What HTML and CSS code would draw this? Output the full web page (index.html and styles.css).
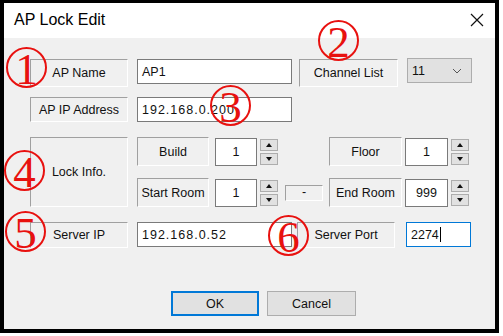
FILE: index.html
```html
<!DOCTYPE html>
<html lang="en">
<head>
  <meta charset="UTF-8">
  <title>AP Lock Edit</title>
  <link rel="stylesheet" href="styles.css">
</head>
<body>
  <div class="dialog">
    <div class="titlebar">
      <span class="title">AP Lock Edit</span>
      <svg class="close" width="14" height="14" viewBox="0 0 14 14">
        <path d="M1 1 L13 13 M13 1 L1 13" stroke="#111" stroke-width="1.2" fill="none"/>
      </svg>
    </div>

    <div class="dlg-body">
      <!-- AP name / channel -->
      <div class="row row-name">
        <div class="static w-label tall">AP Name</div>
        <div class="edit w-ip">AP1</div>
        <div class="static w-channel tall">Channel List</div>
        <div class="combo">
          <span>11</span>
          <svg width="10" height="6" viewBox="0 0 10 6"><polyline points="1,1 5,5 9,1" stroke="#555" stroke-width="1" fill="none"/></svg>
        </div>
      </div>

      <div class="row row-ip">
        <div class="static w-label">AP IP Address</div>
        <div class="edit w-ip ip">192.168.0.200</div>
      </div>

      <!-- lock info block -->
      <div class="row row-lock">
        <div class="static w-label lock-label">Lock Info.</div>
        <div class="lock-rows">
          <div class="lock-row">
            <div class="static w-sub">Build</div>
            <div class="edit num w-num">1</div>
            <div class="spin"><span class="up"></span><span class="down"></span></div>
            <div class="dash hidden">-</div>
            <div class="static w-sub2">Floor</div>
            <div class="edit num w-num2">1</div>
            <div class="spin"><span class="up"></span><span class="down"></span></div>
          </div>
          <div class="lock-row">
            <div class="static w-sub">Start Room</div>
            <div class="edit num w-num">1</div>
            <div class="spin"><span class="up"></span><span class="down"></span></div>
            <div class="dash">-</div>
            <div class="static w-sub2">End Room</div>
            <div class="edit num w-num2">999</div>
            <div class="spin"><span class="up"></span><span class="down"></span></div>
          </div>
        </div>
      </div>

      <div class="row row-server">
        <div class="static w-label server">Server IP</div>
        <div class="edit w-ip ip">192.168.0.52</div>
        <div class="static w-port server">Server Port</div>
        <div class="edit w-portedit focus">2274<span class="caret"></span></div>
      </div>

      <div class="buttons">
        <button class="btn default">OK</button>
        <button class="btn">Cancel</button>
      </div>
    </div>

    <!-- red annotation marks -->
    <span class="mark m1">1</span>
    <span class="mark m2">2</span>
    <span class="mark m3">3</span>
    <span class="mark m4">4</span>
    <span class="mark m5">5</span>
    <span class="mark m6">6</span>
  </div>
</body>
</html>
```

FILE: styles.css
```css
body {
  margin: 0;
  background: #fff;
  font-family: 'Liberation Sans', Arial, sans-serif;
  color: #111;
}
.dialog {
  position: relative;
  box-sizing: border-box;
  width: 499px;
  height: 333px;
  border: 4px solid #000;
  border-top-width: 3px;
  display: flex;
  flex-direction: column;
}
.titlebar {
  height: 35px;
  background: #fff;
  display: flex;
  align-items: center;
  justify-content: space-between;
  padding: 0 10px 0 10px;
  flex-shrink: 0;
}
.title { font-size: 16px; color: #000; margin-top: -1px; }
.close { margin-right: 1px; margin-top: -2px; }

.dlg-body {
  flex: 1;
  background: #f0f0f0;
  padding: 21px 0 0 26px;
  font-size: 12.5px;
}
.row { display: flex; align-items: flex-start; }
.row-ip { margin-top: 10px; }
.row-lock { margin-top: 15px; }
.row-server { margin-top: 15px; }

/* static text boxes (sunken edge) */
.static {
  box-sizing: border-box;
  height: 25px;
  border: 1px solid;
  border-color: #a0a0a0 #fff #fff #a0a0a0;
  display: flex;
  align-items: center;
  justify-content: center;
  white-space: nowrap;
}
.static.tall { height: 28px; }
.w-label { width: 98px; }
.w-channel { width: 99px; margin-left: 7px; }
.lock-label { height: 70px; }
.server { height: 26px; }
.w-port { width: 98px; margin-left: 5px; }

/* edit boxes */
.edit {
  box-sizing: border-box;
  height: 25px;
  background: #fff;
  border: 1px solid #7a7a7a;
  padding-left: 4px;
  display: flex;
  align-items: center;
  margin-left: 9px;
}
.w-ip { width: 155px; }
.ip { letter-spacing: 1px; }
.w-portedit { width: 65px; margin-left: 11px; }
.focus { border-color: #0078d7; }
.caret { display: inline-block; width: 1px; height: 15px; background: #000; margin-left: 1px; }

.combo {
  box-sizing: border-box;
  width: 65px;
  height: 25px;
  margin-left: 9px;
  margin-top: -1px;
  background: #e1e1e1;
  border: 1px solid #adadad;
  display: flex;
  align-items: center;
  justify-content: space-between;
  padding: 0 9px 0 4px;
}

/* lock info grid */
.lock-rows { display: flex; flex-direction: column; gap: 12px; margin-left: 9px; }
.lock-row { display: flex; align-items: flex-start; height: 29px; }
.w-sub { width: 72px; height: 29px; }
.w-sub2 { width: 73px; height: 29px; margin-left: 6px; }
.num { justify-content: center; padding: 0; height: 28px; margin-top: 1px; }
.w-num { width: 42px; margin-left: 6px; }
.w-num2 { width: 43px; margin-left: 3px; }
.spin {
  display: flex;
  flex-direction: column;
  gap: 2px;
  margin-left: 3px;
  margin-top: 2px;
}
.spin span {
  box-sizing: border-box;
  width: 18px;
  height: 12px;
  background: #e1e1e1;
  border: 1px solid #adadad;
  position: relative;
}
.spin span::after {
  content: '';
  position: absolute;
  left: 5px;
  top: 3px;
  border-left: 3px solid transparent;
  border-right: 3px solid transparent;
}
.spin .up::after { border-bottom: 4px solid #111; }
.spin .down::after { border-top: 4px solid #111; }

.dash {
  box-sizing: border-box;
  width: 38px;
  height: 16px;
  margin-left: 7px;
  align-self: center;
  border: 1px solid;
  border-color: #a0a0a0 #fff #fff #a0a0a0;
  text-align: center;
  line-height: 13px;
}
.dash.hidden { visibility: hidden; }

.buttons { display: flex; gap: 8px; margin-top: 43px; padding-left: 141px; }
.btn {
  box-sizing: border-box;
  width: 89px;
  height: 25px;
  background: #e1e1e1;
  border: 1px solid #adadad;
  font-family: 'Liberation Sans', Arial, sans-serif;
  font-size: 12.5px;
  color: #111;
  padding: 0;
}
.btn.default { width: 88px; border: 2px solid #0078d7; }

/* red circled numbers drawn over the dialog */
.mark {
  position: absolute;
  box-sizing: border-box;
  width: 41px;
  height: 41px;
  border: 2px solid #e8110f;
  border-radius: 50%;
  color: #e8110f;
  font-family: 'Liberation Serif', 'Times New Roman', serif;
  font-size: 45px;
  line-height: 40px;
  text-align: center;
}
.m1 { left: 2px; top: 44px; }
.m2 { left: 314px; top: 17px; }
.m3 { left: 206px; top: 82px; }
.m4 { left: 0px; top: 147px; }
.m5 { left: 1px; top: 208px; }
.m6 { left: 264px; top: 212px; }
```
